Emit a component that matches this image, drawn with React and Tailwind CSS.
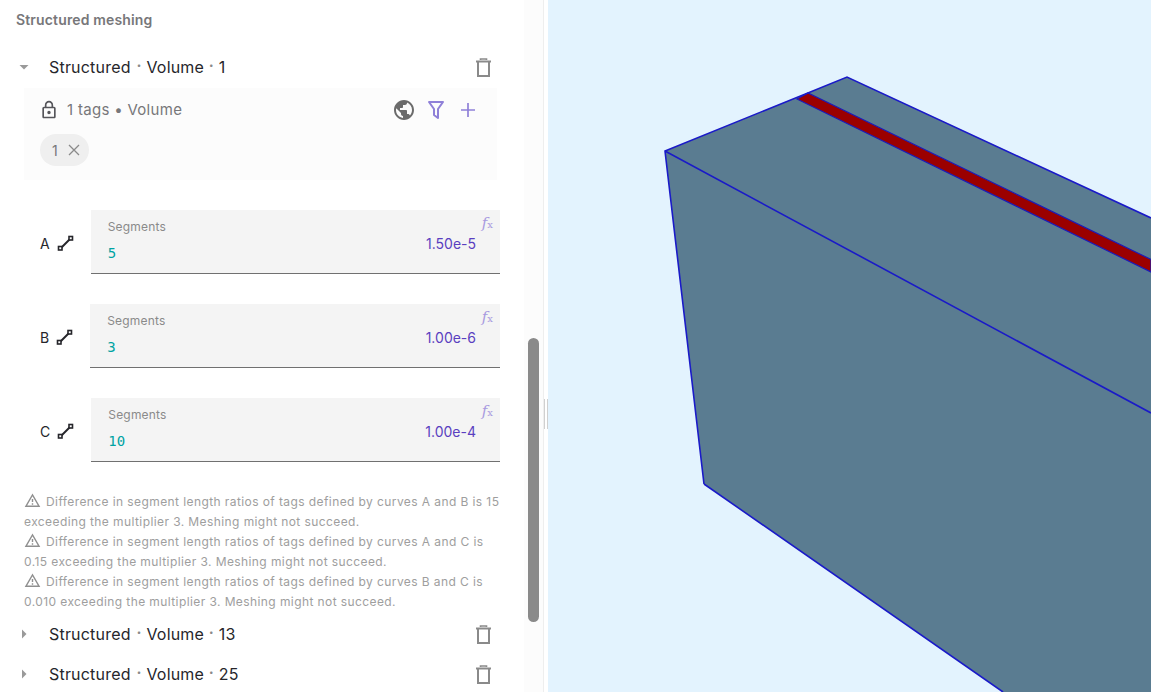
const FONT = { fontFamily: 'Inter, sans-serif' }

const Trash = () => (
  <svg width="15" height="19" viewBox="0 0 15 19" fill="none" stroke="#8a8a8a" strokeWidth="2" className="shrink-0">
    <path d="M0 3.5h15" />
    <path d="M4.5 2V1h6v1" strokeWidth="1.6" />
    <path d="M2 4v14h11V4" />
  </svg>
)

const Caret = ({ open }) => (
  <svg width="10" height="10" viewBox="0 0 10 10" fill="#9a9a9a" className="shrink-0">
    {open ? <polygon points="0.5,3 9.5,3 5,7.5" /> : <polygon points="3,0.5 7.5,5 3,9.5" />}
  </svg>
)

const GroupRow = ({ id, open, className }) => (
  <div className={`flex items-center pr-[52px] ${className}`}>
    <div className="w-[49px] flex pl-[19px]"><Caret open={open} /></div>
    <div className="flex-1 text-[16px] leading-[24px] text-[#26262b] tracking-[0.2px] flex items-center">
      <span>Structured</span>
      <span className="ml-[6px] mr-[5px] text-[8px] text-[#8a8a8a] relative -top-[2px]">•</span>
      <span>Volume</span>
      <span className="ml-[5px] mr-[5px] text-[8px] text-[#8a8a8a] relative -top-[2px]">•</span>
      <span>{id}</span>
    </div>
    <Trash />
  </div>
)

const SegmentIcon = () => (
  <svg width="17" height="17" viewBox="0 0 17 17" fill="none" stroke="#26262b" className="shrink-0 mt-[2px]">
    <path d="M4 13L13 4" strokeWidth="2" />
    <rect x="1.5" y="11.5" width="3.5" height="3.5" strokeWidth="1.6" fill="#fff" />
    <rect x="12" y="1.5" width="3.5" height="3.5" strokeWidth="1.6" fill="#fff" />
  </svg>
)

const SegmentField = ({ label, count, length, className }) => (
  <div className={`flex items-center pl-[40px] pr-[43px] ${className}`}>
    <span className="text-[14px] text-[#26262b] mr-[7px] mt-[2px]">{label}</span>
    <SegmentIcon />
    <div className="relative flex-1 ml-[17px] h-[64px] bg-[#f4f4f4] border-b border-[#707070] pl-[17px] pr-[24px] pt-[9px]">
      <div className="text-[12px] leading-[16px] text-[#8a8a8a] tracking-[0.2px]">Segments</div>
      <div className="flex justify-between items-start">
        <span className="mt-[9px] text-[14px] leading-[18px] text-[#00a3a3]" style={{ fontFamily: '"DejaVu Sans Mono", monospace' }}>{count}</span>
        <span className="-mt-[1px] text-[14px] leading-[20px] text-[#5a3fc0]">{length}</span>
      </div>
      <span className="absolute right-[7px] top-[5px] text-[#a89ae0] text-[15px] leading-[16px] italic" style={{ fontFamily: '"DejaVu Serif", serif' }}>f<span className="text-[10px] not-italic">x</span></span>
    </div>
  </div>
)

const Warning = ({ children }) => (
  <p className="text-[12px] leading-[20px] text-[#9e9e9e] tracking-[0.41px]">
    <svg width="17" height="17" viewBox="0 0 24 24" fill="#8f8f8f" className="inline-block align-[-3px] mr-[5px]">
      <path d="M12 5.99L19.53 19H4.47L12 5.99M12 2L1 21h22L12 2zm1 14h-2v2h2v-2zm0-6h-2v4h2v-4z" />
    </svg>
    {children}
  </p>
)

const Viewer = () => (
  <svg viewBox="548 0 603 692" className="w-full h-full block">
    <polygon points="665,151 847,77 1151,218 1151,692 1003,692 704,484" fill="#5a7c91" />
    <polygon points="797,99 808,93 1151,259.5 1151,272" fill="#9b0000" stroke="#1c1cb8" strokeWidth="1.2" />
    <path d="M704,484 L665,151 L847,77 L1151,218 M665,151 L1151,413 M704,484 L1003,692" fill="none" stroke="#1a1ac8" strokeWidth="1.6" />
  </svg>
)

export default function App() {
  return (
    <div className="flex w-[1151px] h-[692px] overflow-hidden bg-white" style={FONT}>
      <aside className="relative w-[544px] shrink-0 h-full border-r border-[#eeeeee] overflow-hidden">
        <h2 className="pl-[16px] pt-[11px] text-[14px] leading-[18px] font-semibold text-[#77777a] tracking-[0.15px]">Structured meshing</h2>

        <GroupRow id="1" open className="mt-[26px]" />

        <section className="mt-[9px] ml-[24px] mr-[46px] h-[92px] bg-[#fcfcfc] pl-[16px] pr-[21px] pt-[10px]">
          <div className="flex items-center h-[24px]">
            <svg width="20" height="20" viewBox="0 0 24 24" fill="#55555a" className="shrink-0 ml-[-1px]">
              <path d="M18 8h-1V6c0-2.76-2.24-5-5-5S7 3.24 7 6v2H6c-1.1 0-2 .9-2 2v10c0 1.1.9 2 2 2h12c1.1 0 2-.9 2-2V10c0-1.1-.9-2-2-2zM9 6c0-1.66 1.34-3 3-3s3 1.34 3 3v2H9V6zm9 14H6V10h12v10zm-6-3c1.1 0 2-.9 2-2s-.9-2-2-2-2 .9-2 2 .9 2 2 2z" />
            </svg>
            <span className="ml-[8px] flex-1 text-[15px] text-[#77777a] tracking-[0.3px]">1 tags • Volume</span>
            <svg width="24" height="24" viewBox="0 0 24 24" fill="#6b6b6b" className="shrink-0">
              <path d="M12 2C6.48 2 2 6.48 2 12s4.48 10 10 10 10-4.48 10-10S17.52 2 12 2zm-1 17.93c-3.95-.49-7-3.85-7-7.93 0-.62.08-1.21.21-1.79L9 15v1c0 1.1.9 2 2 2v1.93zm6.9-2.54c-.26-.81-1-1.39-1.9-1.39h-1v-3c0-.55-.45-1-1-1H8v-2h2c.55 0 1-.45 1-1V7h2c1.1 0 2-.9 2-2v-.41c2.93 1.19 5 4.06 5 7.41 0 2.08-.8 3.97-2.1 5.39z" />
            </svg>
            <svg width="18" height="20" viewBox="0 0 18 20" fill="none" stroke="#8f80d8" strokeWidth="2" strokeLinejoin="round" className="shrink-0 ml-[11px]">
              <path d="M2 2h14l-5 7v9l-4-3V9z" />
            </svg>
            <svg width="16" height="16" viewBox="0 0 16 16" stroke="#8f80d8" strokeWidth="1.7" className="shrink-0 ml-[15px]">
              <path d="M8 1v14M1 8h14" />
            </svg>
          </div>
          <div className="mt-[12px] inline-flex items-center h-[32px] w-[49px] rounded-full bg-[#efefef] pl-[12px] gap-[10px]">
            <span className="text-[14px] text-[#77777a]">1</span>
            <svg width="12" height="12" viewBox="0 0 12 12" stroke="#8a8a8a" strokeWidth="1.3"><path d="M1 1l10 10M11 1L1 11" /></svg>
          </div>
        </section>

        <SegmentField label="A" count="5" length="1.50e-5" className="mt-[30px]" />
        <SegmentField label="B" count="3" length="1.00e-6" className="mt-[30px]" />
        <SegmentField label="C" count="10" length="1.00e-4" className="mt-[30px]" />

        <div className="mt-[30px] ml-[24px] w-[478px]">
          <Warning>Difference in segment length ratios of tags defined by curves A and B is 15 exceeding the multiplier 3. Meshing might not succeed.</Warning>
          <Warning>Difference in segment length ratios of tags defined by curves A and C is 0.15 exceeding the multiplier 3. Meshing might not succeed.</Warning>
          <Warning>Difference in segment length ratios of tags defined by curves B and C is 0.010 exceeding the multiplier 3. Meshing might not succeed.</Warning>
        </div>

        <GroupRow id="13" className="mt-[10px]" />
        <GroupRow id="25" className="mt-[16px]" />

        {/* scrollbar overlay */}
        <div className="absolute right-0 top-0 bottom-0 w-[19px] bg-[#fcfcfc]">
          <div className="absolute left-[4px] top-[338px] h-[284px] w-[11px] rounded-full bg-[#8a8a8a]" />
        </div>
      </aside>

      <div className="relative w-[4px] shrink-0 bg-white">
        <div className="absolute left-[0px] top-[399px] h-[30px] w-[4px] border-x border-[#d0d0d0]" />
      </div>

      <main className="flex-1 h-full bg-[#e3f3fe]">
        <Viewer />
      </main>
    </div>
  )
}
